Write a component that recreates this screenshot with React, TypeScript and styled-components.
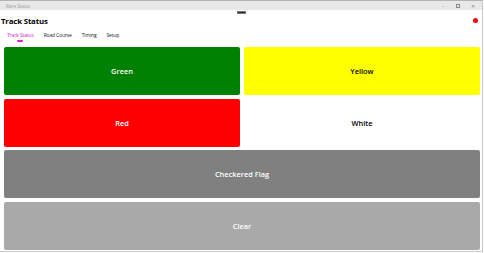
import styled, { createGlobalStyle } from "styled-components";

const GlobalStyle = createGlobalStyle`
  html, body {
    margin: 0;
    padding: 0;
    background: #ffffff;
    width: 484px;
    height: 253px;
    overflow: hidden;
  }
  * {
    box-sizing: border-box;
  }
`;

type Flag = {
  label: string;
  bg: string;
  fg: string;
  wide?: boolean;
};

const flags: Flag[] = [
  { label: "Green", bg: "#008000", fg: "#ffffff" },
  { label: "Yellow", bg: "#ffff00", fg: "#000000" },
  { label: "Red", bg: "#ff0000", fg: "#ffffff" },
  { label: "White", bg: "#ffffff", fg: "#000000" },
  { label: "Checkered Flag", bg: "#808080", fg: "#ffffff", wide: true },
  { label: "Clear", bg: "#a9a9a9", fg: "#ffffff", wide: true },
];

const tabs = ["Track Status", "Road Course", "Timing", "Setup"];

const App = () => {
  return (
    <>
      <GlobalStyle />
      <Window>
        <TitleBar>
          <TitleText>Race Status</TitleText>
          <Controls>
            <Control>–</Control>
            <MaxBox />
            <Control>✕</Control>
          </Controls>
        </TitleBar>
        <DebugHandle />
        <Header>
          <PageTitle>Track Status</PageTitle>
          <StatusDot />
        </Header>
        <TabBar>
          {tabs.map((t, i) => (
            <Tab key={t} $active={i === 0}>
              {t}
              {i === 0 && <Underline />}
            </Tab>
          ))}
        </TabBar>
        <FlagGrid>
          {flags.map((f) => (
            <FlagButton key={f.label} $bg={f.bg} $fg={f.fg} $wide={f.wide}>
              {f.label}
            </FlagButton>
          ))}
        </FlagGrid>
      </Window>
    </>
  );
};

export default App;

const Window = styled.div`
  position: relative;
  width: 483px;
  height: 252px;
  background: #ffffff;
  border-right: 1px solid #c8c8c8;
  border-bottom: 1px solid #c8c8c8;
  font-family: "Open Sans", "Noto Sans", sans-serif;
`;

const TitleBar = styled.div`
  height: 10px;
  background: #e8e8e8;
  border-top: 1px solid #b4b4b4;
  display: flex;
  align-items: center;
  justify-content: space-between;
  padding: 0 6px;
`;

const TitleText = styled.span`
  font-size: 4.5px;
  color: #9a9a9a;
`;

const Controls = styled.div`
  display: flex;
  align-items: center;
  gap: 10px;
`;

const Control = styled.span`
  font-size: 4.5px;
  color: #8a8a8a;
  width: 6px;
  text-align: center;
`;

const MaxBox = styled.span`
  width: 4px;
  height: 4px;
  border: 0.6px solid #8a8a8a;
`;

const DebugHandle = styled.div`
  position: absolute;
  left: 237px;
  top: 11px;
  width: 9px;
  height: 3px;
  background: #2e2e2e;
  border: 0.5px solid #777;
`;

const Header = styled.div`
  display: flex;
  align-items: center;
  justify-content: space-between;
  height: 17px;
  padding: 4px 4px 0 1px;
`;

const PageTitle = styled.h1`
  margin: 0;
  font-size: 7.8px;
  font-weight: 700;
  color: #000000;
  letter-spacing: -0.15px;
`;

const StatusDot = styled.span`
  width: 5px;
  height: 5px;
  border-radius: 50%;
  background: #ff0000;
`;

const TabBar = styled.div`
  display: flex;
  align-items: center;
  height: 16px;
  padding: 0 0 0 2px;
`;

const Tab = styled.span<{ $active?: boolean }>`
  position: relative;
  padding: 0 5px;
  font-size: 5px;
  letter-spacing: -0.15px;
  color: ${(p) => (p.$active ? "#d31ab8" : "#1a1a1a")};
  line-height: 16px;
`;

const Underline = styled.span`
  position: absolute;
  left: 50%;
  bottom: 1px;
  width: 6px;
  height: 2px;
  margin-left: -3px;
  border-radius: 1px;
  background: #e020c8;
`;

const FlagGrid = styled.div`
  display: grid;
  grid-template-columns: 1fr 1fr;
  grid-auto-rows: 48px;
  column-gap: 4px;
  row-gap: 3.5px;
  padding: 4px 2px 0 4px;
`;

const FlagButton = styled.div<{ $bg: string; $fg: string; $wide?: boolean }>`
  grid-column: ${(p) => (p.$wide ? "1 / span 2" : "auto")};
  display: flex;
  align-items: center;
  justify-content: center;
  border-radius: 2px;
  background: ${(p) => p.$bg};
  color: ${(p) => p.$fg};
  font-size: 7.4px;
  font-weight: 600;
`;
